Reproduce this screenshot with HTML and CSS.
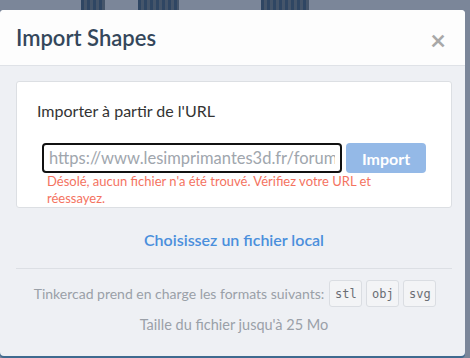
FILE: index.html
```html
<!DOCTYPE html>
<html lang="fr">
<head>
    <meta charset="UTF-8">
    <meta name="viewport" content="width=device-width, initial-scale=1.0">
    <title>Import Shapes</title>
    <link rel="stylesheet" href="styles.css">
</head>
<body>
    <div class="backdrop">
        <span class="stripe stripe-a"></span>
        <span class="stripe stripe-b"></span>
        <span class="stripe stripe-c"></span>
    </div>

    <div class="modal">
        <div class="modal-header">
            <h1>Import Shapes</h1>
            <span class="close">&times;</span>
        </div>

        <div class="modal-body">
            <div class="url-card">
                <div class="url-label">Importer à partir de l'URL</div>
                <div class="url-row">
                    <input class="url-input" type="text" value="https://www.lesimprimantes3d.fr/forum/applications">
                    <button class="import-btn">Import</button>
                </div>
                <div class="url-error">Désolé, aucun fichier n'a été trouvé. Vérifiez votre URL et réessayez.</div>
            </div>

            <div class="local-link">Choisissez un fichier local</div>

            <div class="formats">
                <div class="formats-row">
                    <span>Tinkercad prend en charge les formats suivants:</span>
                    <code class="badge">stl</code>
                    <code class="badge">obj</code>
                    <code class="badge">svg</code>
                </div>
                <div class="size-note">Taille du fichier jusqu'à 25 Mo</div>
            </div>
        </div>
    </div>
</body>
</html>
```

FILE: styles.css
```css
body {
    margin: 0;
    height: 358px;
    overflow: hidden;
    background-color: #7b8699;
    font-family: Lato, 'Open Sans', sans-serif;
    color: #333;
}

.backdrop {
    height: 10px;
    position: relative;
}

.stripe {
    position: absolute;
    top: 0;
    height: 10px;
    background: repeating-linear-gradient(90deg, #2f4663 0 3px, #45556a 3px 6px);
}

.stripe-a { left: 81px; width: 24px; }
.stripe-b { left: 138px; width: 41px; }
.stripe-c { left: 261px; width: 48px; }

.modal {
    width: 465px;
    height: 346px;
    background-color: #eef0f4;
    border-radius: 4px;
    overflow: hidden;
    box-shadow: 0 2px 0 #3f6a8f;
}

.modal-header {
    height: 55px;
    background-color: #fdfdfd;
    border-bottom: 1px solid #dfe2e7;
    display: flex;
    align-items: center;
    justify-content: space-between;
    padding: 0 19px 0 16px;
}

.modal-header h1 {
    margin: 0;
    font-size: 22px;
    font-weight: 600;
    color: #34475b;
}

.close {
    font-size: 27px;
    font-weight: bold;
    color: #a8a8a8;
    line-height: 1;
    margin-top: 4px;
}

.modal-body {
    padding: 15px 13px 0 16px;
}

.url-card {
    background-color: white;
    border: 1px solid #dcdfe3;
    border-radius: 3px;
    padding: 19px 0 0;
}

.url-label {
    padding-left: 20px;
    font-size: 16px;
    line-height: 20px;
    margin-bottom: 22px;
}

.url-row {
    display: flex;
    gap: 4px;
    justify-content: center;
}

.url-input {
    box-sizing: border-box;
    width: 300px;
    height: 30px;
    border: 2px solid #111;
    border-radius: 4px;
    padding: 0 5px;
    font-family: inherit;
    font-size: 16.5px;
    color: #a0a6ad;
    outline: none;
}

.import-btn {
    width: 80px;
    height: 30px;
    border: none;
    border-radius: 4px;
    background-color: #94b9e7;
    color: white;
    font-family: inherit;
    font-size: 16px;
    font-weight: bold;
}

.url-error {
    padding: 0 80px 0 30px;
    font-size: 13px;
    line-height: 17px;
    color: #f4735f;
}

.local-link {
    margin: 22px 0 18px;
    text-align: center;
    font-size: 16px;
    font-weight: 600;
    line-height: 20px;
    color: #4a8fdc;
}

.formats {
    border-top: 1px solid #dcdfe4;
    padding-top: 11px;
    color: #9aa0a8;
    font-size: 14px;
    text-align: center;
}

.formats-row {
    display: flex;
    align-items: center;
    justify-content: center;
    gap: 4px;
    padding-left: 2px;
}

.formats-row span {
    margin-right: 1px;
}

.badge {
    box-sizing: border-box;
    height: 27px;
    width: 33px;
    display: flex;
    align-items: center;
    justify-content: center;
    border: 1px solid #dadde2;
    border-radius: 3px;
    background-color: #f3f4f6;
    font-family: 'DejaVu Sans Mono', monospace;
    font-size: 12px;
    color: #6a6e74;
}

.size-note {
    margin-top: 8px;
    line-height: 20px;
    font-size: 14.5px;
}
```
